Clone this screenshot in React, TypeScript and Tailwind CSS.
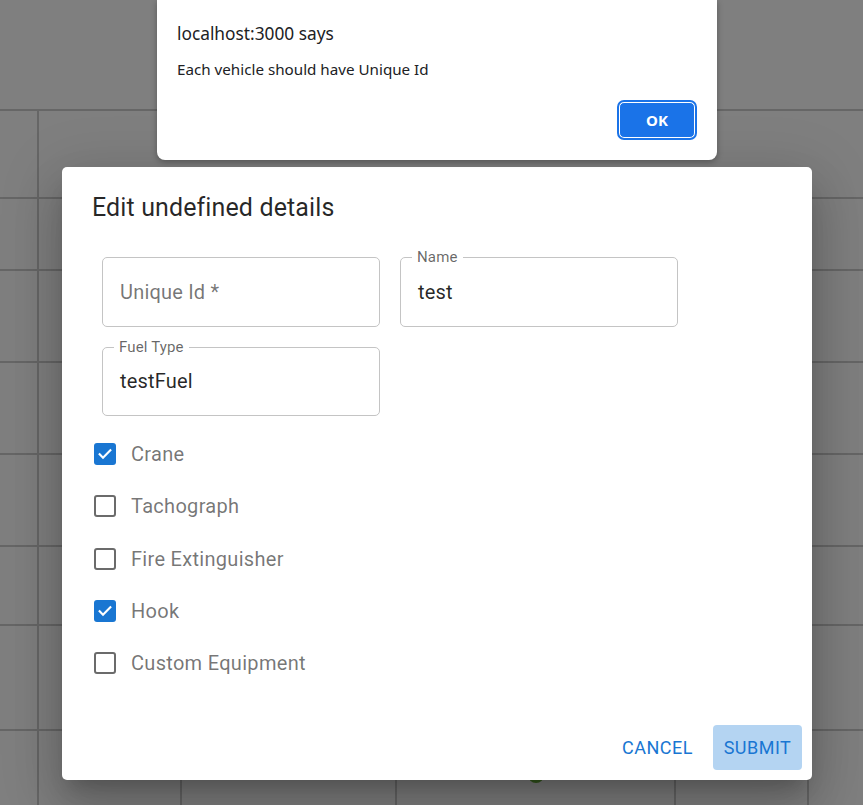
const rows = ['h-[88px]', 'h-[72px]', 'h-[92px]', 'h-[92px]', 'h-[92px]', 'h-[79px]', 'h-[105px]', 'h-[90px]'];

const Cell = ({ line = true, children }: { line?: boolean; children?: React.ReactNode }) => (
  <div className={line ? 'border-b-2 border-r-2 border-[#cccccc]' : 'border-b-2 border-[#cccccc]'}>{children}</div>
);

const Field = ({ label, value, placeholder }: { label?: string; value?: string; placeholder?: string }) => (
  <div className="relative m-[10px] flex h-[69.5px] w-[278px] items-center rounded-[5px] border border-[#c4c4c4] px-[17px]">
    {label && (
      <span className="absolute -top-[10px] left-[11px] bg-white px-[5px] text-[15px] leading-[18px] tracking-[0.15px] text-black/60">
        {label}
      </span>
    )}
    {value ? (
      <span className="text-[20px] tracking-[0.19px] text-black/85">{value}</span>
    ) : (
      <span className="text-[20px] tracking-[0.19px] text-black/55">{placeholder}</span>
    )}
  </div>
);

const Check = ({ label, checked }: { label: string; checked?: boolean }) => (
  <div className="flex h-[52.3px] items-center">
    {checked ? (
      <div className="ml-[2px] flex h-[22px] w-[22px] items-center justify-center rounded-[3px] bg-[#1976d2]">
        <svg width="16" height="16" viewBox="0 0 24 24" fill="none" stroke="white" strokeWidth="3.2" strokeLinecap="square">
          <path d="M4 12.5l5 5L20 6.5" />
        </svg>
      </div>
    ) : (
      <div className="ml-[2px] h-[22px] w-[22px] rounded-[3px] border-[2.5px] border-[#6b6b6b]" />
    )}
    <span className="ml-[15px] text-[20px] tracking-[0.3px] text-black/55">{label}</span>
  </div>
);

export default function App() {
  return (
    <div className="relative h-[805px] w-[863px] overflow-hidden bg-white font-['Roboto',sans-serif]">
      {/* table behind the modal */}
      <div className="h-[111px] border-b-2 border-[#cccccc]" />
      {rows.map((h, i) => {
        const full = i >= rows.length - 2;
        return (
          <div key={i} className={`grid grid-cols-[39px_143px_215px_279px_133px_1fr] ${h}`}>
            <Cell />
            <Cell line={full} />
            <Cell line={full} />
            <Cell line={full}>
              {i === 7 && (
                <div className="flex justify-center pt-[36px]">
                  <div className="h-[16px] w-[16px] rounded-full bg-[#6bb33a]" />
                </div>
              )}
            </Cell>
            <Cell line={full} />
            <Cell line={false} />
          </div>
        );
      })}

      <div className="absolute inset-0 bg-black/50" />

      {/* dialog */}
      <div className="absolute left-[62px] top-[167px] flex h-[613px] w-[750px] flex-col rounded-[5px] bg-white shadow-[0px_14px_19px_-9px_rgba(0,0,0,0.2),0px_30px_48px_4px_rgba(0,0,0,0.14),0px_11px_58px_10px_rgba(0,0,0,0.12)]">
        <h2 className="px-[30px] pb-[19px] pt-[21px] text-[25px] leading-[40px] tracking-[0.12px] text-black/85">Edit undefined details</h2>
        <div className="flex-1 px-[30px]">
          <div className="flex">
            <Field placeholder="Unique Id *" />
            <Field label="Name" value="test" />
          </div>
          <Field label="Fuel Type" value="testFuel" />
          <div className="mt-[12px]">
            <Check label="Crane" checked />
            <Check label="Tachograph" />
            <Check label="Fire Extinguisher" />
            <Check label="Hook" checked />
            <Check label="Custom Equipment" />
          </div>
        </div>
        <div className="flex items-center justify-end gap-[10px] p-[10px]">
          <button className="h-[45px] rounded-[4px] px-[10px] text-[18px] font-normal uppercase tracking-[0.5px] text-[#1976d2]">
            Cancel
          </button>
          <button className="h-[45px] w-[89px] rounded-[4px] bg-[#b4d4f2] px-[8px] text-[18px] font-normal uppercase tracking-[0.5px] text-[#1976d2]">
            Submit
          </button>
        </div>
      </div>

      {/* browser alert */}
      <div className="absolute left-[157px] top-0 h-[160px] w-[560px] rounded-b-[8px] bg-white font-['Noto_Sans',sans-serif] text-[#202124] shadow-[0_2px_6px_rgba(0,0,0,0.3)]">
        <div className="px-[20px] pt-[21px] text-[17.3px] leading-[26px]">localhost:3000 says</div>
        <div className="px-[20px] pt-[11px] text-[15.2px] leading-[22px]">Each vehicle should have Unique Id</div>
        <div className="flex justify-end pr-[22px] pt-[22px]">
          <button className="h-[36px] w-[76px] rounded-[5px] border-[1.5px] border-white bg-[#1a73e8] text-[15px] font-bold text-white outline-2 outline-[#1a73e8]">
            OK
          </button>
        </div>
      </div>
    </div>
  );
}
